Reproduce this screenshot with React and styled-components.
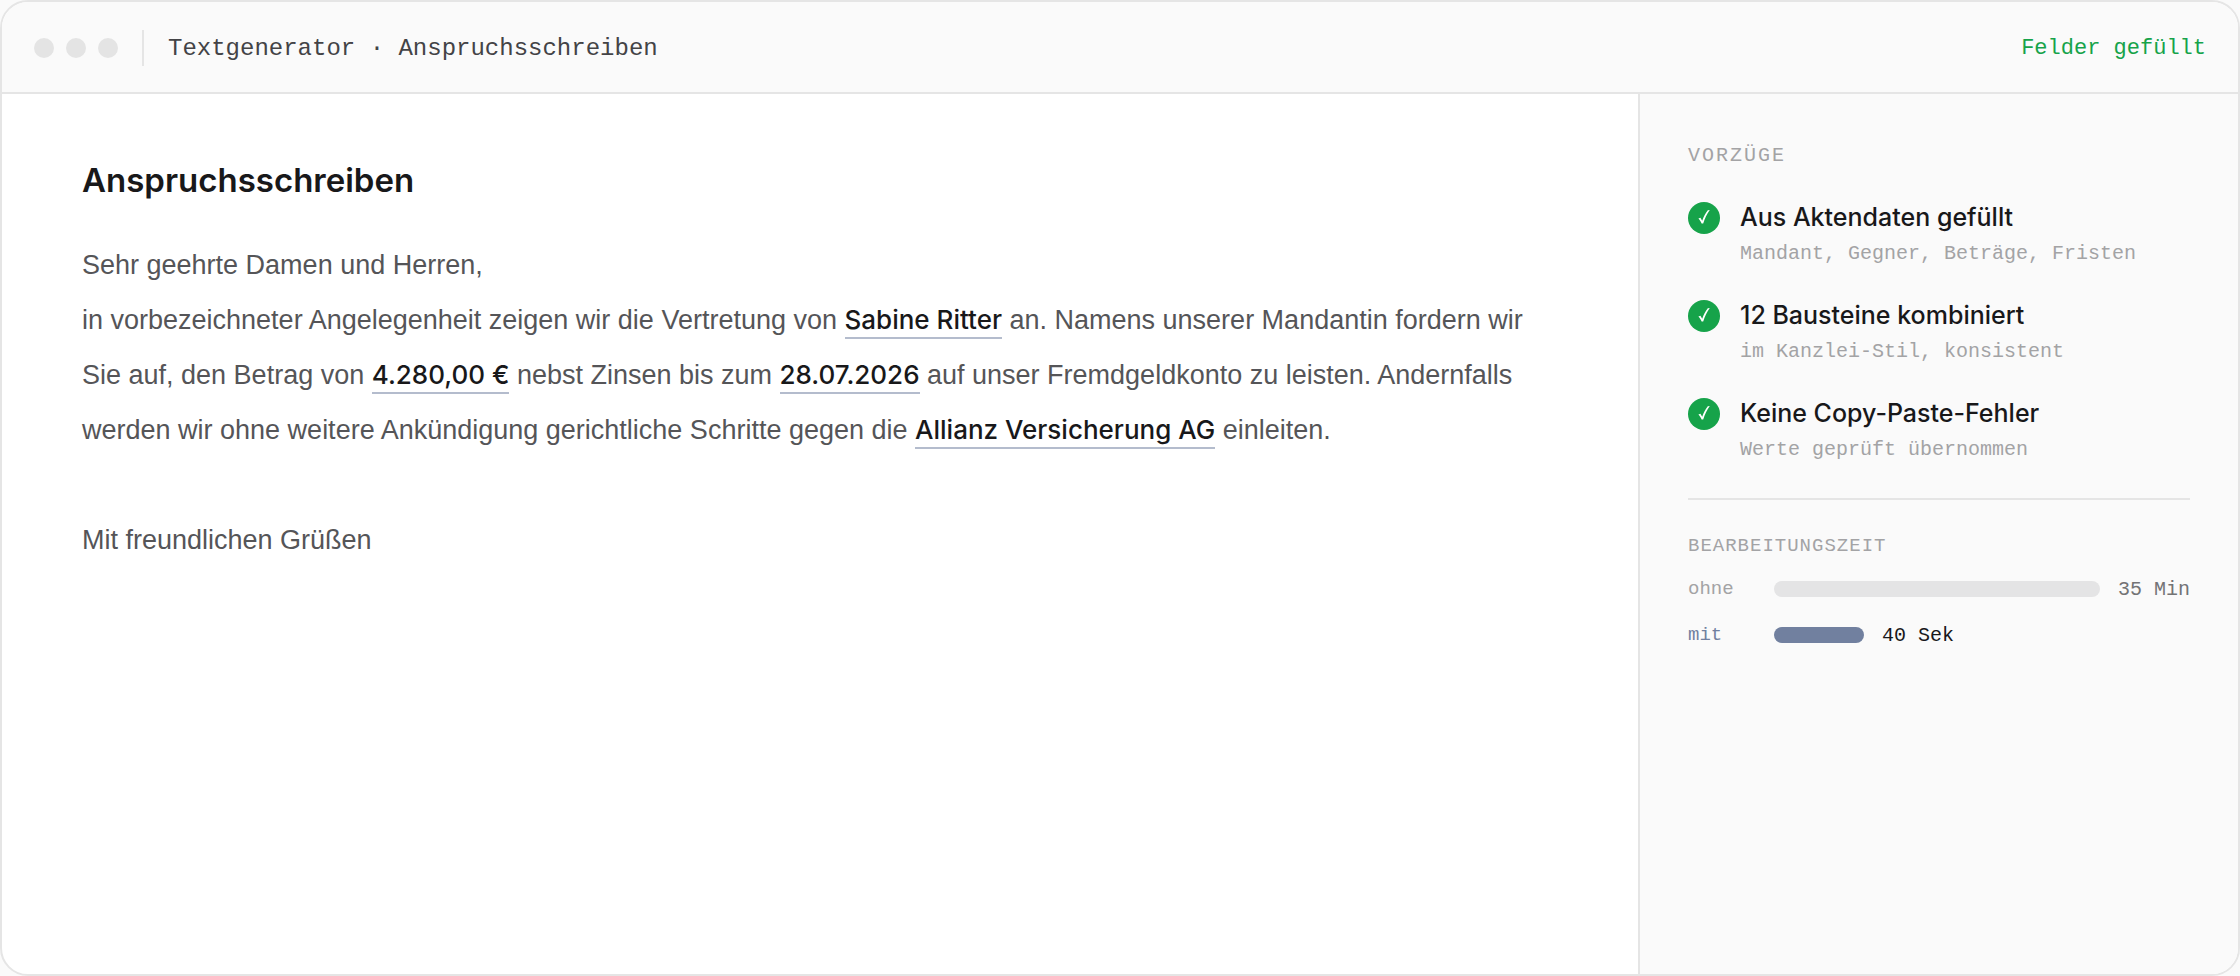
import React from "react";
import styled, { createGlobalStyle } from "styled-components";

const sans = `"Inter", "Liberation Sans", Arial, sans-serif`;
const text = `"Liberation Sans", Arial, sans-serif`;
const mono = `"Liberation Mono", "Courier New", monospace`;

const GlobalStyle = createGlobalStyle`
  * {
    box-sizing: border-box;
  }

  body {
    margin: 0;
    background: #fafafa;
    font-family: ${sans};
    color: #18181a;
  }
`;

const Window = styled.div`
  display: flex;
  flex-direction: column;
  min-height: 100vh;
  overflow: hidden;
  background: #ffffff;
  border: 2px solid #e5e5e5;
  border-radius: 28px;
`;

const TitleBar = styled.header`
  display: flex;
  align-items: center;
  min-height: 92px;
  padding: 2px 32px 0;
  background: #fafafa;
  border-bottom: 2px solid #e5e5e5;
  font-family: ${mono};
`;

const Dots = styled.div`
  display: flex;
  gap: 12px;
`;

const Dot = styled.span`
  width: 20px;
  height: 20px;
  border-radius: 50%;
  background: #e4e4e4;
`;

const Divider = styled.span`
  width: 2px;
  height: 36px;
  margin: 0 24px;
  background: #e5e5e5;
`;

const WindowTitle = styled.span`
  font-size: 24px;
  color: #434346;
`;

const Status = styled.span`
  margin-left: auto;
  font-size: 22px;
  color: #16a34a;
`;

const Content = styled.div`
  display: grid;
  flex: 1;
  grid-template-columns: minmax(0, 1fr) 600px;
`;

const Letter = styled.main`
  padding: 60px 80px;
`;

const LetterTitle = styled.h1`
  margin: 0 0 32px;
  font-size: 33px;
  font-weight: 600;
  line-height: 52px;
`;

const LetterText = styled.p`
  margin: 0 0 ${(props) => (props.$spaced ? "55px" : "0")};
  font-family: ${text};
  font-size: 27px;
  line-height: 55px;
  color: #555558;
`;

const Field = styled.strong`
  padding-bottom: 2px;
  border-bottom: 2px solid #b4bccd;
  font-family: ${sans};
  font-size: 26px;
  font-weight: 500;
  line-height: 32px;
  color: #18181a;
`;

const Sidebar = styled.aside`
  padding: 48px;
  background: #fafafa;
  border-left: 2px solid #e5e5e5;
`;

const SectionLabel = styled.h2`
  margin: 0 0 6px;
  font-family: ${mono};
  font-size: ${(props) => (props.$small ? "19px" : "20px")};
  font-weight: 400;
  line-height: 28px;
  letter-spacing: ${(props) => (props.$small ? "1px" : "2px")};
  text-transform: uppercase;
  color: #a3a3a5;
`;

const BenefitList = styled.ul`
  display: flex;
  flex-direction: column;
  gap: 24px;
  margin: 0;
  padding: 24px 0 28px;
  list-style: none;
  border-bottom: 2px solid #e5e5e5;
`;

const Benefit = styled.li`
  display: flex;
  gap: 20px;
`;

const BenefitIcon = styled.svg`
  flex: none;
  width: 32px;
  height: 32px;
  margin-top: 2px;
`;

const BenefitTitle = styled.div`
  font-size: 25px;
  font-weight: 500;
  line-height: 34px;
`;

const BenefitText = styled.div`
  font-family: ${mono};
  font-size: 20px;
  line-height: 40px;
  color: #a3a3a5;
`;

const Timing = styled.section`
  padding-top: 32px;
`;

const TimingRow = styled.div`
  display: flex;
  align-items: center;
  height: 46px;
  font-family: ${mono};
  font-size: 20px;
`;

const TimingLabel = styled.span`
  flex: none;
  width: 86px;
  font-size: 19px;
  color: ${(props) => (props.$active ? "#71809f" : "#a3a3a5")};
`;

const TimingBar = styled.span`
  flex: ${(props) => (props.$active ? "0 0 90px" : "1")};
  height: 16px;
  margin-right: 18px;
  border-radius: 8px;
  background: ${(props) => (props.$active ? "#71809f" : "#e4e4e5")};
`;

const TimingValue = styled.span`
  color: ${(props) => (props.$active ? "#18181a" : "#737375")};
`;

const benefits = [
  { title: "Aus Aktendaten gefüllt", text: "Mandant, Gegner, Beträge, Fristen" },
  { title: "12 Bausteine kombiniert", text: "im Kanzlei-Stil, konsistent" },
  { title: "Keine Copy-Paste-Fehler", text: "Werte geprüft übernommen" },
];

const CheckIcon = () => (
  <BenefitIcon viewBox="0 0 32 32" aria-hidden="true">
    <circle cx="16" cy="16" r="16" fill="#16a34a" />
    <path
      d="M10.4 16.6 L12.4 15.8 L14.2 18.8 C15.6 14.6 17.6 11 19.8 8.2 L21.8 8 C19 11.8 16.8 16.4 15.2 21.4 L13.6 21.6 C12.8 19.6 11.6 17.8 10.4 16.6 Z"
      fill="#ffffff"
    />
  </BenefitIcon>
);

const App = () => {
  return (
    <>
      <GlobalStyle />
      <Window>
        <TitleBar>
          <Dots>
            <Dot />
            <Dot />
            <Dot />
          </Dots>
          <Divider />
          <WindowTitle>Textgenerator · Anspruchsschreiben</WindowTitle>
          <Status>Felder gefüllt</Status>
        </TitleBar>
        <Content>
          <Letter>
            <LetterTitle>Anspruchsschreiben</LetterTitle>
            <LetterText>Sehr geehrte Damen und Herren,</LetterText>
            <LetterText $spaced>
              in vorbezeichneter Angelegenheit zeigen wir die Vertretung von{" "}
              <Field>Sabine Ritter</Field> an. Namens unserer Mandantin fordern
              wir Sie auf, den Betrag von <Field>4.280,00 €</Field> nebst Zinsen
              bis zum <Field>28.07.2026</Field> auf unser Fremdgeldkonto zu
              leisten. Andernfalls werden wir ohne weitere Ankündigung
              gerichtliche Schritte gegen die{" "}
              <Field>Allianz Versicherung AG</Field> einleiten.
            </LetterText>
            <LetterText>Mit freundlichen Grüßen</LetterText>
          </Letter>
          <Sidebar>
            <SectionLabel>Vorzüge</SectionLabel>
            <BenefitList>
              {benefits.map((benefit) => (
                <Benefit key={benefit.title}>
                  <CheckIcon />
                  <div>
                    <BenefitTitle>{benefit.title}</BenefitTitle>
                    <BenefitText>{benefit.text}</BenefitText>
                  </div>
                </Benefit>
              ))}
            </BenefitList>
            <Timing>
              <SectionLabel $small>Bearbeitungszeit</SectionLabel>
              <TimingRow>
                <TimingLabel>ohne</TimingLabel>
                <TimingBar />
                <TimingValue>35 Min</TimingValue>
              </TimingRow>
              <TimingRow>
                <TimingLabel $active>mit</TimingLabel>
                <TimingBar $active />
                <TimingValue $active>40 Sek</TimingValue>
              </TimingRow>
            </Timing>
          </Sidebar>
        </Content>
      </Window>
    </>
  );
};

export default App;
